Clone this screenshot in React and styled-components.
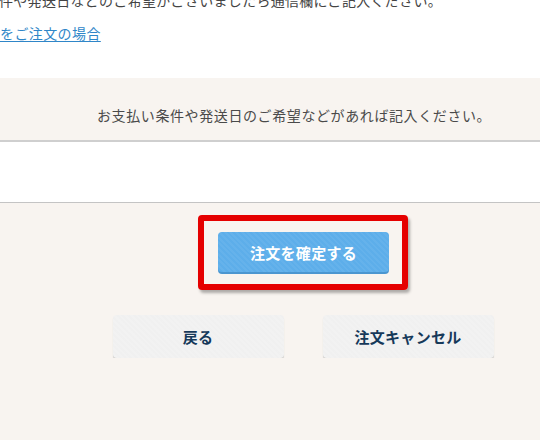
import React from 'react'
import styled, { createGlobalStyle } from 'styled-components'

const GlobalStyle = createGlobalStyle`
  html, body {
    margin: 0;
    padding: 0;
    background: #f8f4f0;
  }
  body {
    font-family: "Noto Sans CJK JP", "Noto Sans", sans-serif;
    color: #333;
    overflow: hidden;
  }
`

const Notice = styled.section`
  background: #fff;
  height: 78px;
  overflow: hidden;
`

const NoticeText = styled.p`
  margin: -12px 0 0 -1px;
  font-size: 14px;
  line-height: 24px;
  letter-spacing: 0.3px;
  color: #444;
  white-space: nowrap;
`

const NoticeLink = styled.a`
  display: inline-block;
  margin-top: 11px;
  font-size: 14px;
  line-height: 20px;
  color: #2f86c8;
  text-decoration: underline;
  text-underline-offset: 2px;
  letter-spacing: 0.4px;
`

const Remarks = styled.section`
  padding-top: 26px;
`

const RemarksLabel = styled.p`
  margin: 0 0 14px;
  padding-left: 97px;
  font-size: 14px;
  line-height: 22px;
  letter-spacing: 0.6px;
  color: #4a4a4a;
`

const Memo = styled.textarea`
  display: block;
  box-sizing: border-box;
  width: 100%;
  height: 63px;
  margin: 0;
  border: none;
  border-top: 2px solid #cfcfcf;
  border-bottom: 1px solid #c4c4c4;
  background: #fff;
  resize: none;
  outline: none;
`

const Actions = styled.div`
  display: flex;
  flex-direction: column;
  align-items: center;
  padding: 12px 0 0 66px;
  gap: 25px;
`

const Highlight = styled.div`
  box-sizing: border-box;
  width: 210px;
  padding: 11px 14px 12px;
  border: 6px solid #e50000;
  border-radius: 4px;
  box-shadow: 2px 3px 3px rgba(0, 0, 0, 0.3);
`

const Button = styled.button`
  display: flex;
  align-items: center;
  justify-content: center;
  box-sizing: border-box;
  width: 171px;
  height: ${p => (p.$primary ? '40px' : '43px')};
  padding: 0;
  border: none;
  border-radius: 4px;
  font-family: inherit;
  font-size: 15px;
  font-weight: 700;
  letter-spacing: 0.3px;
  cursor: pointer;
  color: ${p => (p.$primary ? '#fff' : '#16395a')};
  background-color: ${p => (p.$primary ? '#5daeea' : '#f2f2f2')};
  background-image: repeating-linear-gradient(
    45deg,
    ${p => (p.$primary ? 'rgba(255,255,255,0.05)' : 'rgba(0,0,0,0.008)')} 0 2px,
    transparent 2px 4px
  );
  box-shadow: ${p => (p.$primary ? '0 2px 0 #4b96d0' : '0 2px 1px #d2d0ce')};
`

const Row = styled.div`
  display: flex;
  gap: 39px;
`

export default function App() {
  return (
    <>
      <GlobalStyle />
      <Notice>
        <NoticeText>件や発送日などのご希望がございましたら通信欄にご記入ください。</NoticeText>
        <NoticeLink href="#">をご注文の場合</NoticeLink>
      </Notice>
      <Remarks>
        <RemarksLabel>お支払い条件や発送日のご希望などがあれば記入ください。</RemarksLabel>
        <Memo />
      </Remarks>
      <Actions>
        <Highlight>
          <Button $primary>注文を確定する</Button>
        </Highlight>
        <Row>
          <Button>戻る</Button>
          <Button>注文キャンセル</Button>
        </Row>
      </Actions>
    </>
  )
}
